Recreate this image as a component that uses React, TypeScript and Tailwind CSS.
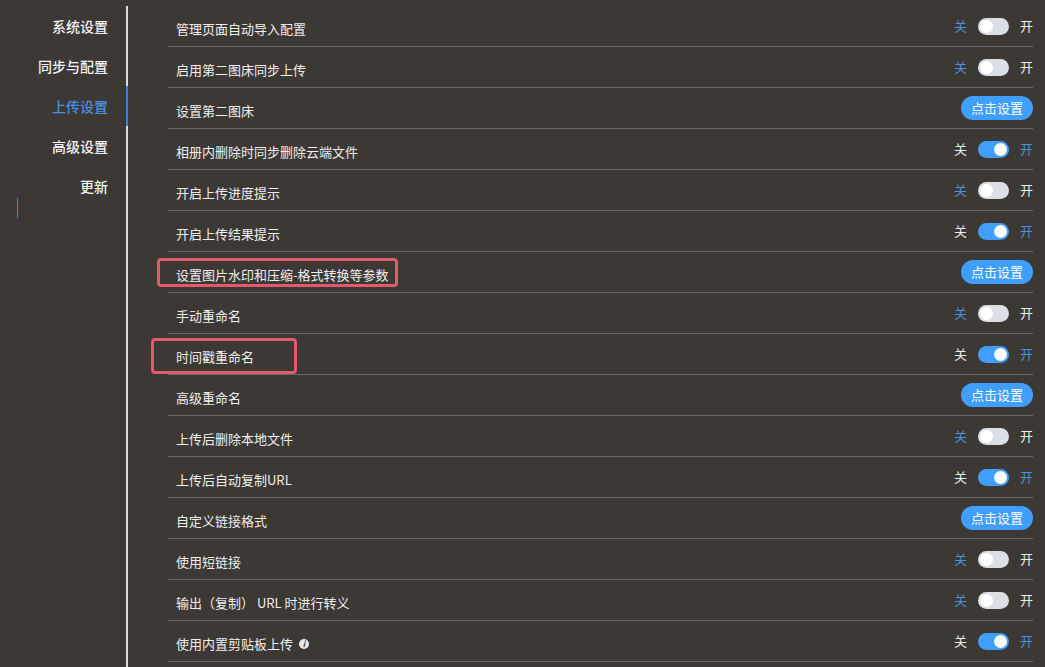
import React from 'react';

type Row =
  | { label: string; kind: 'toggle'; on: boolean; info?: boolean }
  | { label: string; kind: 'button' };

const rows: Row[] = [
  { label: '管理页面自动导入配置', kind: 'toggle', on: false },
  { label: '启用第二图床同步上传', kind: 'toggle', on: false },
  { label: '设置第二图床', kind: 'button' },
  { label: '相册内删除时同步删除云端文件', kind: 'toggle', on: true },
  { label: '开启上传进度提示', kind: 'toggle', on: false },
  { label: '开启上传结果提示', kind: 'toggle', on: true },
  { label: '设置图片水印和压缩-格式转换等参数', kind: 'button' },
  { label: '手动重命名', kind: 'toggle', on: false },
  { label: '时间戳重命名', kind: 'toggle', on: true },
  { label: '高级重命名', kind: 'button' },
  { label: '上传后删除本地文件', kind: 'toggle', on: false },
  { label: '上传后自动复制URL', kind: 'toggle', on: true },
  { label: '自定义链接格式', kind: 'button' },
  { label: '使用短链接', kind: 'toggle', on: false },
  { label: '输出（复制） URL 时进行转义', kind: 'toggle', on: false },
  { label: '使用内置剪贴板上传', kind: 'toggle', on: true, info: true },
];

const menu = ['系统设置', '同步与配置', '上传设置', '高级设置', '更新'];

function Toggle({ on }: { on: boolean }) {
  return (
    <div className="flex items-center gap-[11px] text-[13px]">
      <span className={on ? 'text-[#ececec]' : 'text-[#4f8fdc]'}>关</span>
      <div
        className={`w-[31px] h-[17px] rounded-full flex items-center px-[2px] ${
          on ? 'bg-[#409eff] justify-end' : 'bg-[#dcdfe6] justify-start'
        }`}
      >
        <div className="w-[13px] h-[13px] rounded-full bg-white" />
      </div>
      <span className={on ? 'text-[#4f8fdc]' : 'text-[#ececec]'}>开</span>
    </div>
  );
}

export default function App() {
  return (
    <div
      className="relative w-[1045px] h-[667px] overflow-hidden bg-[#3c3833] text-[#efefef] flex"
      style={{ fontFamily: '"Noto Sans CJK SC", "Noto Sans", sans-serif' }}
    >
      {/* Sidebar */}
      <div className="w-[128px] mt-[6px] border-r-2 border-[#dcdcdc] flex flex-col shrink-0">
        {menu.map((m, i) => (
          <div
            key={m}
            className={`relative h-[40px] flex items-center justify-end pr-[18px] text-[14px] font-medium ${
              i === 2 ? 'text-[#4a8fe0]' : 'text-[#f2f2f2]'
            }`}
          >
            {m}
            {i === 2 && <div className="absolute right-[-2px] top-0 w-[2px] h-[40px] bg-[#3f7fd0]" />}
          </div>
        ))}
      </div>
      <div className="absolute left-[17px] top-[198px] w-[1px] h-[20px] bg-[#4a86d0]" />

      {/* Content */}
      <div className="flex-1 pl-[40px] pr-[12px] pt-[6px]">
        {rows.map((r) => (
          <div key={r.label} className="h-[41px] flex items-center justify-between border-b border-[#6e6963] pl-[8px]">
            <div className="flex items-center gap-[6px] pt-[5px] text-[13px]">
              <span>{r.label}</span>
              {r.kind === 'toggle' && r.info && (
                <span className="w-[10px] h-[10px] rounded-full bg-[#e8e8e8] text-[#3c3833] text-[8px] font-bold italic flex items-center justify-center leading-none">
                  i
                </span>
              )}
            </div>
            {r.kind === 'toggle' ? (
              <Toggle on={r.on} />
            ) : (
              <button className="h-[24px] w-[72px] rounded-full bg-[#409eff] text-white text-[13px] flex items-center justify-center">
                点击设置
              </button>
            )}
          </div>
        ))}
      </div>

      {/* Annotation boxes */}
      <div className="absolute left-[157px] top-[258px] w-[241px] h-[29px] border-[3px] border-[#e35a6c] rounded-[4px]" />
      <div className="absolute left-[151px] top-[338px] w-[146px] h-[36px] border-[3px] border-[#e35a6c] rounded-[4px]" />
    </div>
  );
}
